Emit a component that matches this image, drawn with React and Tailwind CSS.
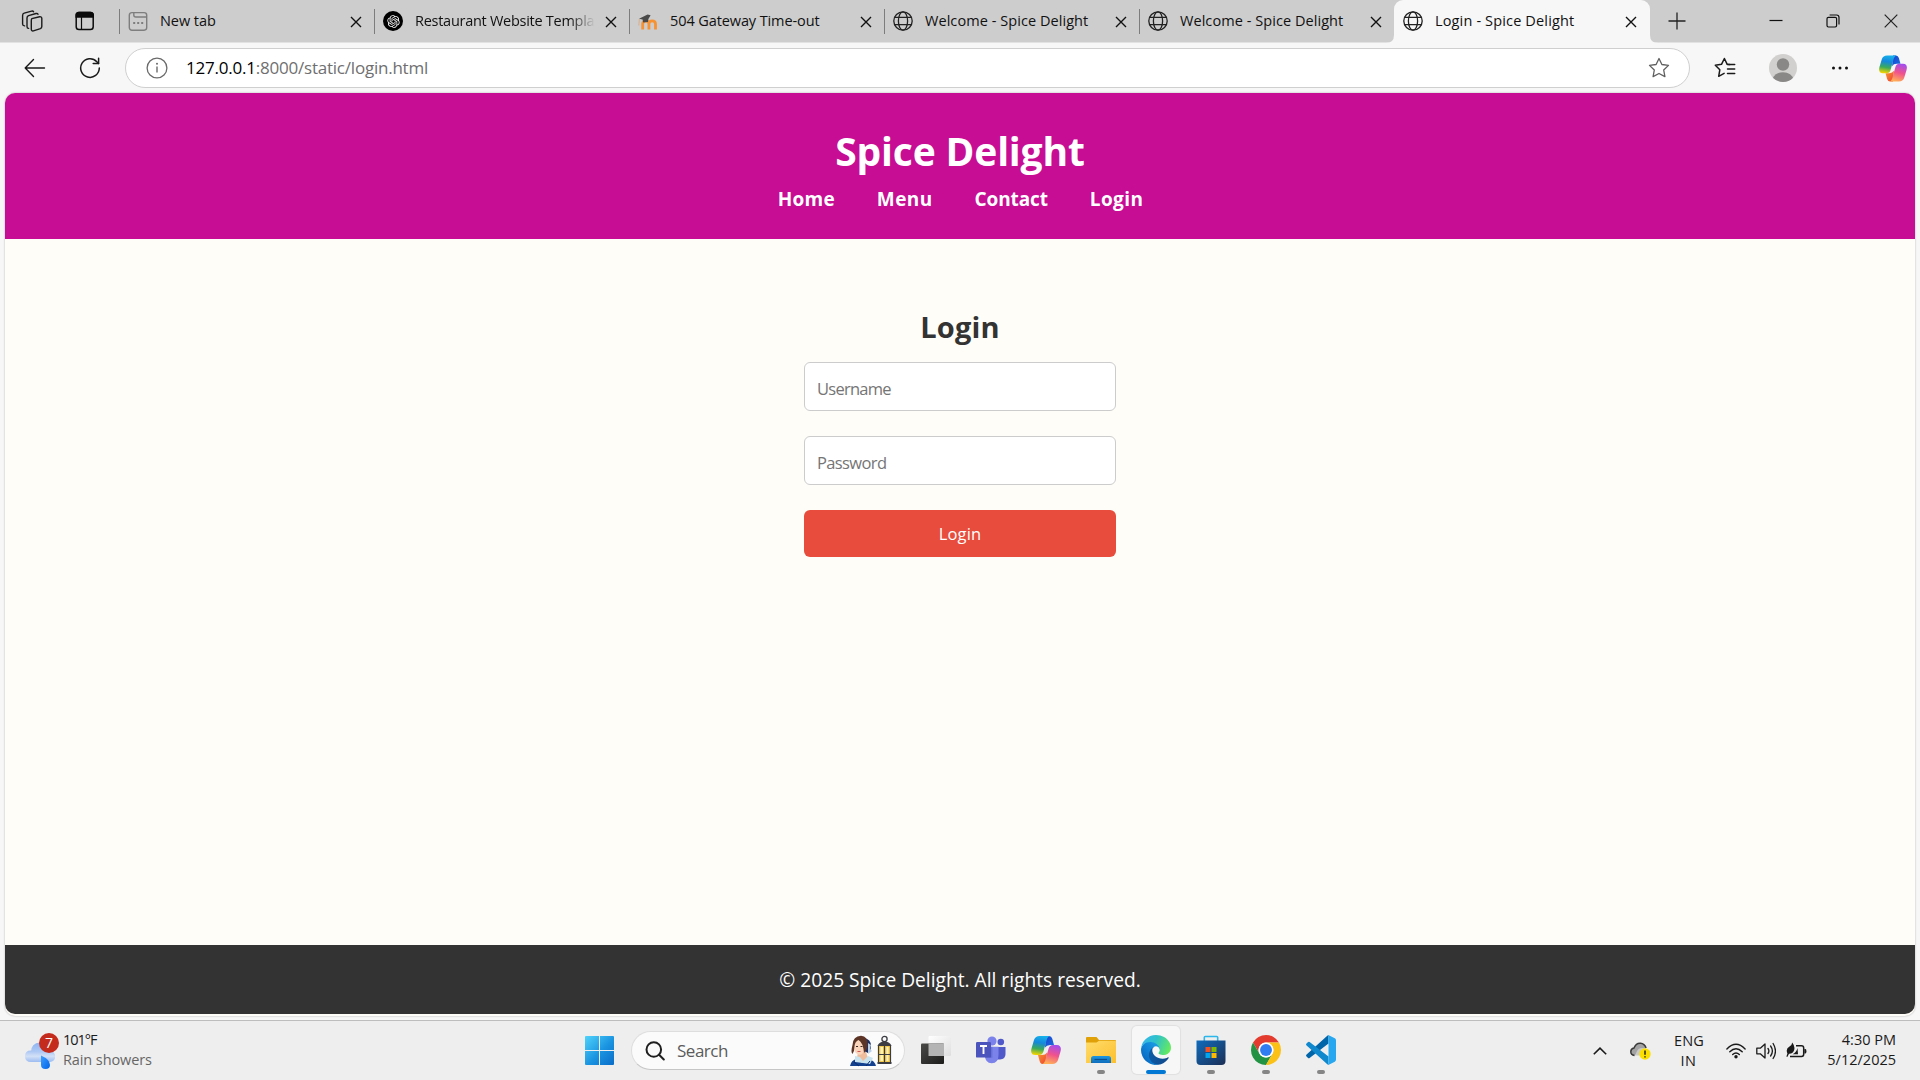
import React from "react";
import { RiOpenaiFill } from "react-icons/ri";

/* ---------- browser icons ---------- */

function Globe() {
  return (
    <svg viewBox="0 0 20 20" className="h-5 w-5" fill="none" stroke="#222" strokeWidth="1.3">
      <circle cx="10" cy="10" r="9.2" />
      <ellipse cx="10" cy="10" rx="4.6" ry="9.2" />
      <path d="M1.6 6.4h16.8M1.6 13.6h16.8" />
    </svg>
  );
}

function NewTabIcon() {
  return (
    <svg viewBox="0 0 20 20" className="h-5 w-5" fill="none" stroke="#7e7e7e" strokeWidth="1.4">
      <rect x="1.3" y="1.6" width="17.4" height="17.6" rx="2.6" />
      <path d="M5.8 1.6V4q0 2 2 2h11" />
      <path d="M5.200 12h2M9.200 12h2M13.200 12h2" strokeWidth="2" />
    </svg>
  );
}

function OpenAiIcon() {
  return (
    <span className="flex h-5 w-5 items-center justify-center rounded-full bg-black">
      <RiOpenaiFill className="h-[15px] w-[15px] text-white" />
    </span>
  );
}

function MoodleIcon() {
  return (
    <svg viewBox="0 0 20 20" className="h-5 w-5" fill="none">
      <path d="M4.7 18.500v-5.4q0-3.2 3.1-3.2t3.100 3.2v5.400M10.900 18.500v-5.4q0-3.2 3.300-3.2t3.300 3.2v5.400" stroke="#f79232" strokeWidth="2.800" />
      <path d="M1 7.700 9.600 3.500l3 .8-2.2 3.6-.4 3-4.8.6-.6-3z" fill="#4a4a4a" />
      <path d="M1.4 7.900.8 14.500" stroke="#d9a878" strokeWidth=".8" />
    </svg>
  );
}

function CloseX() {
  return (
    <svg viewBox="0 0 12 12" className="h-3 w-3" stroke="#111" strokeWidth="1.4">
      <path d="M1 1l10 10M11 1 1 11" />
    </svg>
  );
}

function WorkspacesIcon() {
  return (
    <svg viewBox="0 0 22 22" className="h-[22px] w-[22px]" fill="none" stroke="#1b1b1b" strokeWidth="1.4" strokeLinejoin="round" strokeLinecap="round">
      <path d="M10.8 8.6 18.6 6.8q2-.3 2.2 1.6v8.2q0 1.500-1.400 2l-7 2.300q-1.900.400-2.100-1.500V10.800q0-1.600 .5-2.200z" />
      <path d="M7.600 18.400q-1.600-.2-1.600-2V8q0-1.700 1.600-2.300l7.400-2.200q1.600-.3 2 .8" />
      <path d="M3.600 15.900q-2-.3-2-2V5.400Q1.600 3.700 3.200 3.200l7.400-2.100q1.500-.3 2 .7" />
    </svg>
  );
}

function VerticalTabsIcon() {
  return (
    <svg viewBox="0 0 20 20" className="h-5 w-5" fill="none" stroke="#0b0b0b" strokeWidth="1.5">
      <rect x="1.200" y="1.500" width="17" height="17" rx="2.800" />
      <path d="M1.200 6V4.300q0-2.800 2.800-2.800h11.400q2.800 0 2.800 2.800V6z" fill="#0b0b0b" />
      <path d="M6.500 5v13.500" strokeWidth="1.200" />
    </svg>
  );
}

function BackIcon() {
  return (
    <svg viewBox="0 0 22 20" className="h-5 w-[22px]" fill="none" stroke="#1a1a1a" strokeWidth="1.400" strokeLinecap="round" strokeLinejoin="round">
      <path d="M20.500 10H1.200M9.500 1.600 1.200 10l8.300 8.400" />
    </svg>
  );
}

function ReloadIcon() {
  return (
    <svg viewBox="0 0 22 22" className="h-[22px] w-[22px]" fill="none" stroke="#1a1a1a" strokeWidth="1.500" strokeLinecap="round" strokeLinejoin="round">
      <path d="M20.300 11A9.300 9.300 0 1 1 17.800 4.700l1.700 1.800" />
      <path d="M19.600 1.300v5.300h-5.400" />
    </svg>
  );
}

function InfoIcon() {
  return (
    <svg viewBox="0 0 22 22" className="h-[22px] w-[22px]" fill="none" stroke="#6a6a6a" strokeWidth="1.300">
      <circle cx="11" cy="11" r="9.900" />
      <path d="M11 9.600v6" strokeWidth="1.400" />
      <circle cx="11" cy="6.700" r="1" fill="#6a6a6a" stroke="none" />
    </svg>
  );
}

function StarIcon() {
  return (
    <svg viewBox="0 0 22 22" className="h-[22px] w-[22px]" fill="none" stroke="#5f5f5f" strokeWidth="1.300" strokeLinejoin="round">
      <path d="M11 1.500l2.900 6 6.600.9-4.800 4.600 1.200 6.600L11 16.500l-5.900 3.100 1.200-6.600L1.500 8.400l6.600-.9z" />
    </svg>
  );
}

function FavouritesIcon() {
  return (
    <svg viewBox="0 0 22 22" className="h-[22px] w-[22px]" fill="none" stroke="#1a1a1a" strokeWidth="1.500" strokeLinejoin="round" strokeLinecap="round">
      <path d="M15.600 7.600l-2.400-.3L10.400 1.500 7.500 7.300 1.300 8.200l4.500 4.600-1.100 6.500 5.400-2.900" />
      <path d="M13.500 7.600h7.200M13.500 12h7.200M13.500 16.400h7.200" />
    </svg>
  );
}

function Avatar() {
  return (
    <svg viewBox="0 0 28 28" className="h-7 w-7">
      <defs><clipPath id="avatar"><circle cx="14" cy="14" r="14" /></clipPath></defs>
      <g clipPath="url(#avatar)">
        <rect width="28" height="28" fill="#d2d0ce" />
        <circle cx="14" cy="10.500" r="6.200" fill="#8a8886" />
        <ellipse cx="14" cy="25.200" rx="10" ry="7" fill="#8a8886" />
      </g>
    </svg>
  );
}

function Copilot({ id, className }) {
  return (
    <svg viewBox="0 0 30 28" className={className}>
      <defs>
        <linearGradient id={id + "a"} x1=".5" y1="0" x2=".35" y2="1">
          <stop offset="0" stopColor="#16b0ea" /><stop offset=".35" stopColor="#1488dc" />
          <stop offset=".68" stopColor="#3cab5a" /><stop offset="1" stopColor="#f5d400" />
        </linearGradient>
        <linearGradient id={id + "b"} x1=".7" y1="0" x2=".4" y2="1">
          <stop offset="0" stopColor="#a24df0" /><stop offset=".5" stopColor="#f0528c" /><stop offset="1" stopColor="#ffb057" />
        </linearGradient>
        <linearGradient id={id + "c"} x1="0" y1="0" x2="1" y2="1">
          <stop offset="0" stopColor="#1c3fd0" /><stop offset="1" stopColor="#1672e0" />
        </linearGradient>
        <linearGradient id={id + "d"} x1="0" y1="0" x2="1" y2="1">
          <stop offset="0" stopColor="#f79a2c" /><stop offset="1" stopColor="#ef3f35" />
        </linearGradient>
      </defs>
      <path d="M15 0H18q2.600 0 3.300 2.800L23 9H19q-3.500 0-5 2.500z" fill={`url(#${id}c)`} />
      <path d="M15 28H12q-2.600 0-3.300-2.800L7 19H11q3.500 0 5-2.500z" fill={`url(#${id}d)`} />
      <path d="M8.600 0H19C17 .4 16.200 2.200 15.600 4.200L12.400 15.500Q11.400 19 8 19H4.200C.4 19-.5 16 .5 12.500L3 4Q4.400 0 8.600 0z" fill={`url(#${id}a)`} />
      <path d="M21.400 28H11c2-.4 2.800-2.200 3.400-4.200L17.600 12.500Q18.600 9 22 9h3.800c3.800 0 4.700 3 3.700 6.500L27 24q-1.400 4-5.600 4z" fill={`url(#${id}b)`} />
    </svg>
  );
}

/* ---------- browser chrome ---------- */

const tabs = [
  { title: "New tab", icon: <NewTabIcon />, track: "tracking-[-0.05px]" },
  { title: "Restaurant Website Templa", icon: <OpenAiIcon />, track: "tracking-[-0.27px]", fade: true },
  { title: "504 Gateway Time-out", icon: <MoodleIcon />, track: "tracking-[-0.1px]" },
  { title: "Welcome - Spice Delight", icon: <Globe />, track: "tracking-[0.06px]" },
  { title: "Welcome - Spice Delight", icon: <Globe />, track: "tracking-[0.06px]" },
  { title: "Login - Spice Delight", icon: <Globe />, track: "tracking-[0.15px]", active: true },
];

function Tab({ tab }) {
  const frame = tab.active
    ? "relative flex h-[43px] w-[256px] items-center rounded-t-[9px] bg-[#f7f7f7] pl-[9px] pb-px"
    : "relative flex h-[43px] w-[255px] items-center pl-[9px] pb-px";
  const fade = tab.fade ? " [mask-image:linear-gradient(to_right,black_155px,transparent_180px)]" : "";
  return (
    <div className={frame}>
      {!tab.active && <span className="absolute left-0 top-[9px] h-[25px] w-px bg-[#7d7d7d]" />}
      {tab.active && (
        <>
          <svg viewBox="0 0 8 8" className="absolute -left-2 bottom-0 h-2 w-2"><path d="M8 0v8H0q8 0 8-8z" fill="#f7f7f7" /></svg>
          <svg viewBox="0 0 8 8" className="absolute -right-2 bottom-0 h-2 w-2"><path d="M0 0v8h8Q0 8 0 0z" fill="#f7f7f7" /></svg>
        </>
      )}
      <span className="w-8 shrink-0">{tab.icon}</span>
      <span className={"w-[181px] whitespace-nowrap text-[14.5px] text-[#111] " + tab.track + fade}>{tab.title}</span>
      <span className="ml-[9px] mt-px"><CloseX /></span>
    </div>
  );
}

function TabStrip() {
  return (
    <div className="flex h-[43px] border-b border-[#e2e2e2] bg-[#cdcdcd]">
      <div className="flex w-[119px] items-center pl-[21px]">
        <WorkspacesIcon />
        <span className="ml-[32px]"><VerticalTabsIcon /></span>
      </div>
      {tabs.map((t, i) => <Tab key={i} tab={t} />)}
      <div className="flex grow items-center pl-[18px]">
        <svg viewBox="0 0 18 18" className="h-[18px] w-[18px]" stroke="#222" strokeWidth="1.300"><path d="M9 .5v17M.5 9h17" /></svg>
        <svg viewBox="0 0 14 14" className="ml-[83px] h-[14px] w-[14px]" stroke="#111" strokeWidth="1.200"><path d="M.5 6.500h13" /></svg>
        <svg viewBox="0 0 14 14" className="ml-[43px] h-[14px] w-[14px]" fill="none" stroke="#111" strokeWidth="1.200">
          <rect x="1" y="3.400" width="9.600" height="9.600" rx="1.400" /><path d="M3.600 1h7q2.400 0 2.400 2.400v7" />
        </svg>
        <svg viewBox="0 0 14 14" className="ml-[44px] h-[14px] w-[14px]" stroke="#222" strokeWidth="1.200"><path d="M.7.700l12.600 12.600M13.300.700.700 13.300" /></svg>
      </div>
    </div>
  );
}

function Toolbar() {
  return (
    <div className="flex h-[50px] items-center pl-[24px]">
      <BackIcon />
      <span className="ml-[33px]"><ReloadIcon /></span>
      <div className="ml-[24px] flex h-10 w-[1565px] items-center rounded-full border border-[#cfcfcf] bg-white pl-[20px] pr-[19px]">
        <InfoIcon />
        <span className="ml-[18px] grow text-[17px] tracking-[-0.220px] text-[#6f6f6f]"><span className="text-black">127.0.0.1</span>:8000/static/login.html</span>
        <StarIcon />
      </div>
      <span className="ml-[24px]"><FavouritesIcon /></span>
      <span className="ml-[33px]"><Avatar /></span>
      <svg viewBox="0 0 18 4" className="ml-[34px] h-1 w-[18px]" fill="#111">
        <circle cx="2.500" cy="2" r="1.500" /><circle cx="9" cy="2" r="1.500" /><circle cx="15.500" cy="2" r="1.500" />
      </svg>
      <Copilot id="bar" className="ml-[30px] h-[27px] w-7" />
    </div>
  );
}

/* ---------- web page ---------- */

function WebPage() {
  const field = "h-[49px] w-full rounded-[6px] border border-[#ccc] bg-white px-[12px] pt-[3px] text-[16.5px] outline-none placeholder:text-[#757575]";
  return (
    <div className="mx-[5px] flex h-[923px] flex-col overflow-hidden rounded-[10px] bg-[#fffdf8] shadow-[0_0_2px_rgba(0,0,0,0.300)]">
      <header className="flex h-[146px] flex-col items-center bg-[#c70d93] pt-[34px] text-white">
        <h1 className="text-[39px] font-bold leading-[48px] tracking-[-0.170px]">Spice Delight</h1>
        <nav className="mt-[10px] flex gap-[42px] pl-px text-[19px] font-bold leading-7">
          <a className="tracking-[0.250px]">Home</a>
          <a className="tracking-[0.400px]">Menu</a>
          <a className="tracking-[-0.120px]">Contact</a>
          <a className="tracking-[0.390px]">Login</a>
        </nav>
      </header>
      <main className="flex grow flex-col items-center pt-[68px]">
        <h2 className="text-[29px] font-bold leading-10 tracking-[0.200px] text-[#333]">Login</h2>
        <form className="mt-[15px] flex w-[312px] flex-col gap-[25px]">
          <input className={field + " tracking-[-0.750px]"} placeholder="Username" />
          <input className={field + " tracking-[-0.620px]"} placeholder="Password" />
          <button type="button" className="h-[47px] rounded-[6px] bg-[#e74c3c] pt-[2px] text-[16.5px] tracking-[0.100px] text-white">Login</button>
        </form>
      </main>
      <footer className="mb-[2px] flex h-[69px] items-center justify-center rounded-b-[10px] bg-[#333] pt-px text-[19.200px] text-white">
        © 2025 Spice Delight. All rights reserved.
      </footer>
    </div>
  );
}

/* ---------- taskbar ---------- */

function Weather() {
  return (
    <div className="flex w-[560px] items-center pl-[25px]">
      <div className="relative -mt-[2px] h-[38px] w-[34px]">
        <svg viewBox="0 0 34 38" className="h-[38px] w-[34px]">
          <defs>
            <linearGradient id="cloud" x1="0" y1="0" x2="0" y2="1"><stop offset="0" stopColor="#8db4f2" /><stop offset="1" stopColor="#d5e2f8" /></linearGradient>
            <linearGradient id="cloudFront" x1="0" y1="0" x2="0" y2="1"><stop offset="0" stopColor="#a5c2f3" /><stop offset=".5" stopColor="#d3e0f7" /><stop offset="1" stopColor="#9dbcf0" /></linearGradient>
            <linearGradient id="drop" x1="0" y1="0" x2="1" y2="1"><stop offset="0" stopColor="#3fa0ff" /><stop offset="1" stopColor="#0063e8" /></linearGradient>
          </defs>
          <path d="M6 21q0-9 9-9.500 9 0 10 8 5 1 5 6 0 5-5 5.500H6z" fill="url(#cloud)" />
          <path d="M6 31q-6 0-6-5.800T6 19.500q3-.5 6.500 1.300t6.500.7h6q5 .500 5 4.500t-5 5z" fill="url(#cloudFront)" />
          <path d="M16 24.500q9 4 9 9.500 0 4-4.500 4t-4.500-4z" fill="url(#drop)" />
        </svg>
        <span className="absolute left-[14px] top-[2px] flex h-5 w-5 items-center justify-center rounded-full bg-[#c42b1c] text-[14px] leading-5 text-white">7</span>
      </div>
      <div className="-mt-[2px] ml-[4px] text-[14.5px] leading-5">
        <div className="tracking-[-1px] text-[#1a1a1a]">101°F</div>
        <div className="tracking-[-0.100px] text-[#666]">Rain showers</div>
      </div>
    </div>
  );
}

function StartIcon() {
  return (
    <svg viewBox="0 0 29 29" className="h-[29px] w-[29px]">
      <defs><linearGradient id="win" x1="0" y1="0" x2="1" y2="1"><stop offset="0" stopColor="#4fd3fb" /><stop offset=".55" stopColor="#1a93e0" /><stop offset="1" stopColor="#0a6cc8" /></linearGradient></defs>
      <path d="M1 0h13v14H0V1q0-1 1-1zM15 0h13q1 0 1 1v13H15zM0 15h14v14H1q-1 0-1-1zM15 15h14v13q0 1-1 1H15z" fill="url(#win)" />
    </svg>
  );
}

function SearchArt() {
  return (
    <svg viewBox="0 0 44 32" className="h-8 w-11">
      <path d="M0 31q1-6 7-7l4-2 8 2q6 2 7 7z" fill="#14418f" />
      <path d="M14 3q7 1 7 8 0 5-3 7l-4-2z" fill="#1c2f63" />
      <path d="M18 8l3 2-1 4 2 2-4 3z" fill="#b8cfe6" />
      <path d="M8 17h8l2 6-6 5-5-5z" fill="#f0bd9c" />
      <path d="M5 21l5 1 3 4 5-5 5 2-3 6-7-1-8-1z" fill="#c8e3ee" />
      <ellipse cx="9.500" cy="12" rx="5.600" ry="7.800" fill="#fad5bb" />
      <path d="M2.500 10Q3 1 11 .800 18 1.500 17.500 9q0 6-3.500 9-.5-5-1.500-8Q10.500 6 8.500 5 5 6.500 4.500 11q0 5-2 8-2-2 0-9z" fill="#5d3527" />
      <path d="M6 11.500h2M10.500 11.500h2" stroke="#3d2a25" />
      <path d="M7.500 16.500h3" stroke="#cf5754" />
      <path d="M4 27l5 4M20 26l-4 5" stroke="#0b2c6d" />
      <circle cx="34.500" cy="4" r="2.600" fill="none" stroke="#3b3d42" strokeWidth="1.300" />
      <path d="M27.500 11q1.500-4.500 7-4.500t7 4.500z" fill="#3b3d42" />
      <path d="M28.500 11h12v17h-12z" fill="#f6cb4a" />
      <path d="M30.500 12h2.500v14h-2.500zM36.500 12h2v14h-2z" fill="#fff3c0" />
      <path d="M28.500 10v18M34.500 10v18M40.500 10v18M28 19.500h13" stroke="#3b3d42" strokeWidth="1.200" />
      <path d="M27.500 27h14v2h-14z" fill="#3b3d42" />
    </svg>
  );
}

function SearchBox() {
  return (
    <div className="ml-[17px] flex h-[39px] w-[274px] items-center rounded-full border border-[#dedede] border-b-[#c6c6c6] bg-[#fbfbfb] pl-[13px]">
      <svg viewBox="0 0 20 20" className="h-5 w-5" fill="none" stroke="#1f1f1f" strokeWidth="2" strokeLinecap="round"><circle cx="8.800" cy="8.500" r="7.300" /><path d="M14.100 13.800l4.700 4.700" /></svg>
      <span className="ml-[12px] grow text-[17px] tracking-[-0.480px] text-[#5c5c5c]">Search</span>
      <span className="mr-[10px]"><SearchArt /></span>
    </div>
  );
}

function TaskViewIcon() {
  return (
    <svg viewBox="0 0 30 30" className="h-[30px] w-[30px]">
      <defs>
        <linearGradient id="tvDark" x1="0" y1="0" x2="1" y2="1"><stop offset="0" stopColor="#4a4a48" /><stop offset="1" stopColor="#1c1c1b" /></linearGradient>
        <linearGradient id="tvLight" x1="0" y1="0" x2="1" y2="1"><stop offset="0" stopColor="#fff" /><stop offset="1" stopColor="#dedede" /></linearGradient>
      </defs>
      <rect x="7.500" y="1" width="22.500" height="20" rx="1" fill="url(#tvLight)" />
      <rect x="0" y="8.500" width="23" height="20.500" rx="1" fill="url(#tvDark)" />
      <path d="M7.500 8.500H23V21H7.500z" fill="#b4b4b4" />
    </svg>
  );
}

function TeamsIcon() {
  return (
    <svg viewBox="0 0 30 28" className="h-7 w-[30px]">
      <circle cx="24.800" cy="6" r="3.300" fill="#5059c9" />
      <path d="M19 11h10.500v7q0 5-5.500 5.500h-5z" fill="#5059c9" />
      <circle cx="16" cy="5" r="4.600" fill="#7b83eb" />
      <path d="M9 10.800h13.500V19q0 8-6.800 8.300Q9 27 9 19z" fill="#7b83eb" />
      <path d="M9 10.800h7.500v11H9z" fill="#5a62cd" opacity=".6" />
      <rect x="0" y="6" width="15" height="15.600" rx="1.200" fill="#4b53bc" />
      <path d="M4 10h7M7.500 10v8" stroke="#fff" strokeWidth="1.900" />
    </svg>
  );
}

function FolderIcon() {
  return (
    <svg viewBox="0 0 30 28" className="h-7 w-[30px]">
      <defs>
        <linearGradient id="fold" x1="0" y1="0" x2="1" y2="1"><stop offset="0" stopColor="#ffdc6b" /><stop offset="1" stopColor="#fcbf2d" /></linearGradient>
        <linearGradient id="foldTray" x1="0" y1="0" x2="0" y2="1"><stop offset="0" stopColor="#1d97e0" /><stop offset="1" stopColor="#0f6dbd" /></linearGradient>
      </defs>
      <path d="M0 2q0-1 1-1h9.500l2.500 3h16q1 0 1 1v5H0z" fill="#e0a008" />
      <path d="M0 6.500h10.500L13 4.800h16q1 0 1 1V27H0z" fill="url(#fold)" />
      <path d="M5 27v-4.500Q5 20 7.500 20h15q2.500 0 2.500 2.500V27z" fill="url(#foldTray)" />
      <path d="M8.500 23.500h12.500" stroke="#0b4f8e" strokeWidth="1.200" />
    </svg>
  );
}

function EdgeIcon() {
  return (
    <svg viewBox="0 0 256 256" className="h-[30px] w-[30px]">
      <defs>
        <linearGradient id="edA" x1=".1" y1=".5" x2="1" y2=".6"><stop offset="0" stopColor="#0c59a4" /><stop offset="1" stopColor="#114a8b" /></linearGradient>
        <linearGradient id="edB" x1=".9" y1=".2" x2=".2" y2=".9"><stop offset="0" stopColor="#1b9de2" /><stop offset=".5" stopColor="#0f84d8" /><stop offset="1" stopColor="#0669c0" /></linearGradient>
        <linearGradient id="edC" x1="0" y1=".3" x2="1" y2=".6"><stop offset="0" stopColor="#35b6ee" /><stop offset=".45" stopColor="#2fc2c8" /><stop offset="1" stopColor="#66eb5e" /></linearGradient>
      </defs>
      <g transform="translate(-4.630 -4.920)">
        <path fill="url(#edA)" d="M235.680 195.460a93.730 93.730 0 0 1-10.540 4.710 101.870 101.870 0 0 1-35.900 6.460c-47.320 0-88.540-32.550-88.540-74.320A31.480 31.480 0 0 1 117.130 105c-42.800 1.800-53.800 46.400-53.800 72.530 0 73.880 68.090 81.370 82.760 81.370 7.910 0 19.840-2.300 27-4.560l1.310-.440a128.340 128.340 0 0 0 66.600-52.800 4 4 0 0 0-5.320-5.640z" />
        <path fill="url(#edB)" d="M110.340 246.340A79.200 79.200 0 0 1 87.600 225a80.720 80.720 0 0 1 29.530-120c3.120-1.470 8.450-4.130 15.540-4a32.350 32.350 0 0 1 25.690 13 31.880 31.880 0 0 1 6.360 18.660c0-.210 24.460-79.600-80-79.600-43.900 0-80 41.660-80 78.210a130.150 130.150 0 0 0 12.110 56 128 128 0 0 0 156.380 67.110 75.550 75.550 0 0 1-62.780-8z" />
        <path fill="url(#edC)" d="M156.940 153.780c-.810 1.050-3.300 2.500-3.300 5.660 0 2.610 1.700 5.120 4.720 7.230 14.380 10 41.490 8.680 41.560 8.680a59.560 59.560 0 0 0 30.270-8.350 61.380 61.380 0 0 0 30.430-52.880c.260-22.410-8-37.310-11.340-43.910-21.190-41.440-66.920-65.280-116.630-65.280a128 128 0 0 0-128 126.200c.480-36.540 36.800-66.050 80-66.050 3.500 0 23.460.340 42 10.070 16.340 8.580 24.900 18.940 30.850 29.210 6.180 10.670 7.280 24.150 7.280 29.520s-2.740 13.330-7.800 19.900z" />
      </g>
    </svg>
  );
}

function StoreIcon() {
  return (
    <svg viewBox="0 0 30 30" className="h-[30px] w-[30px]">
      <defs><linearGradient id="store" x1="0" y1="0" x2="1" y2="1"><stop offset="0" stopColor="#0f6cbd" /><stop offset="1" stopColor="#1c2f55" /></linearGradient></defs>
      <path d="M8.300 6V2.500q0-1 1-1h11.400q1 0 1 1V6" fill="none" stroke="#2cb7ec" strokeWidth="1.600" />
      <path d="M.500 5.500h29V26q0 4-4 4h-21q-4 0-4-4z" fill="url(#store)" />
      <path d="M9.500 12h5v5h-5z" fill="#f25022" /><path d="M15.500 12h5v5h-5z" fill="#7fba00" />
      <path d="M9.500 18h5v5h-5z" fill="#00a4ef" /><path d="M15.500 18h5v5h-5z" fill="#ffb900" />
    </svg>
  );
}

function ChromeIcon() {
  return (
    <svg viewBox="0 0 48 48" className="h-[30px] w-[30px]">
      <path d="M24 12h20.780A24 24 0 0 0 3.220 12L13.600 30A12 12 0 0 1 24 12z" fill="#e33b2e" />
      <path d="M34.390 30 24 48A24 24 0 0 1 3.220 12L13.600 30A12 12 0 0 0 34.390 30z" fill="#229342" />
      <path d="M24 12h20.780A24 24 0 0 1 24 48l10.390-18A12 12 0 0 0 24 12z" fill="#fbc116" />
      <circle cx="24" cy="24" r="12" fill="#fff" /><circle cx="24" cy="24" r="9.500" fill="#2f7df0" />
    </svg>
  );
}

function VsCodeIcon() {
  return (
    <svg viewBox="0 0 100 100" className="h-[30px] w-[30px]">
      <path d="M75 1v27L12 77q-3 2-6-1l-5-5q-2-3 1-6L70 3q2-2 5-2z" fill="#0065a9" />
      <path d="M75 99V72L12 23q-3-2-6 1l-5 5q-2 3 1 6l68 62q2 2 5 2z" fill="#1088ce" />
      <path d="M71 99q4-1 4-6V7q0-5-4-6 2-1 5 0l20 10q4 2 4 7v64q0 5-4 7L76 99q-3 1-5 0z" fill="#27a7f0" />
    </svg>
  );
}

const apps = [
  { icon: <TaskViewIcon /> },
  { icon: <TeamsIcon /> },
  { icon: <Copilot id="task" className="h-7 w-[30px]" /> },
  { icon: <FolderIcon />, mark: "dot" },
  { icon: <EdgeIcon />, mark: "bar" },
  { icon: <StoreIcon />, mark: "dot" },
  { icon: <ChromeIcon />, mark: "dot" },
  { icon: <VsCodeIcon />, mark: "dot" },
];

function Apps() {
  return (
    <div className="-mt-px ml-[7px] flex gap-[7px]">
      {apps.map((a, i) => (
        <div key={i} className={"relative flex h-12 w-12 items-center justify-center rounded-[5px]" + (a.mark === "bar" ? " bg-[#f7f7f7] shadow-[0_0_1px_1px_rgba(0,0,0,0.060)]" : "")}>
          {a.icon}
          {a.mark === "dot" && <span className="absolute bottom-0 left-5 h-1 w-2 rounded-full bg-[#858585]" />}
          {a.mark === "bar" && <span className="absolute bottom-0 left-[14px] h-1 w-5 rounded-full bg-[#0078d4]" />}
        </div>
      ))}
    </div>
  );
}

function Tray() {
  return (
    <div className="ml-auto flex items-center pr-[24px] text-[14.5px] leading-5 text-[#1a1a1a]">
      <svg viewBox="0 0 14 8" className="h-2 w-[14px]" fill="none" stroke="#1a1a1a" strokeWidth="1.600"><path d="M.8 7.300 7 1.200l6.200 6.100" /></svg>
      <svg viewBox="0 0 21 18" className="ml-[23px] h-[18px] w-[21px]">
        <path d="M4.500 13.500Q.800 13 .800 9.800.800 6.600 4 6 6 1 10.500 1.300q4 .2 5.600 4.700" fill="#a3a3a3" stroke="#3a3a3a" strokeWidth="1.500" />
        <path d="M7 9q2-4.500 9-2.500L10 13.500H5z" fill="#c9c9c9" />
        <circle cx="15" cy="12" r="5.700" fill="#fce100" /><path d="M15 8.500v4.200M15 14.200v1.400" stroke="#222" strokeWidth="1.500" />
      </svg>
      <div className="ml-[23px] w-[29px] text-center"><div className="tracking-[0.200px]">ENG</div><div className="tracking-[0.500px]">IN</div></div>
      <svg viewBox="0 0 20 16" className="ml-[23px] h-4 w-5" fill="none" stroke="#1a1a1a" strokeWidth="1.400" strokeLinecap="round">
        <path d="M.9 5.900Q10-3.300 19.100 5.900M3.800 8.800q6.200-6.200 12.400 0M6.700 11.600q3.300-3.200 6.600 0" /><circle cx="10" cy="13.800" r="1.700" fill="#1a1a1a" stroke="none" />
      </svg>
      <svg viewBox="0 0 20 18" className="ml-[10px] h-[18px] w-5" fill="none" stroke="#1a1a1a" strokeWidth="1.300" strokeLinecap="round" strokeLinejoin="round">
        <path d="M.8 6.200h3.500L9 2v14l-4.700-4.200H.8zM12 6.500q1.800 2.500 0 5M14.600 4q3.600 5 0 10M17.100 1.500q4.700 7.500 0 15" />
      </svg>
      <svg viewBox="0 0 21 18" className="ml-[10px] h-[18px] w-[21px]">
        <path d="M10 3.800h5.500q2.200 0 2.200 2.200v6.300q0 2.200-2.200 2.200H4" fill="none" stroke="#1a1a1a" strokeWidth="1.500" />
        <path d="M18.400 7h1q1 0 1 2.200t-1 2.200h-1z" fill="#1a1a1a" />
        <path d="M11.500 6l.5 6.300H6.500q4-1.800 5-6.300z" fill="#1a1a1a" />
        <path d="M6.200.5Q9.500 4.500 8 8.500q-1.500 3.500-5 3.200l-1.700 3.300-.9-.5 1-3Q-.6 6.500 3.500 4.500 6 3.200 6.200.500z" fill="#1a1a1a" />
      </svg>
      <div className="-mt-[2px] ml-[20px] w-[69px] text-right"><div>4:30 PM</div><div>5/12/2025</div></div>
    </div>
  );
}

function Taskbar() {
  return (
    <div className="mt-[4px] flex h-[60px] items-center border-t border-[#bdbdbd] bg-[#eee]">
      <div className="w-[585px]"><Weather /></div>
      <StartIcon />
      <SearchBox />
      <Apps />
      <Tray />
    </div>
  );
}

export default function App() {
  return (
    <div className="h-[1080px] w-[1920px] overflow-hidden bg-[#f7f7f7] font-['Open_Sans','Noto_Sans',sans-serif]">
      <TabStrip />
      <Toolbar />
      <WebPage />
      <Taskbar />
    </div>
  );
}
